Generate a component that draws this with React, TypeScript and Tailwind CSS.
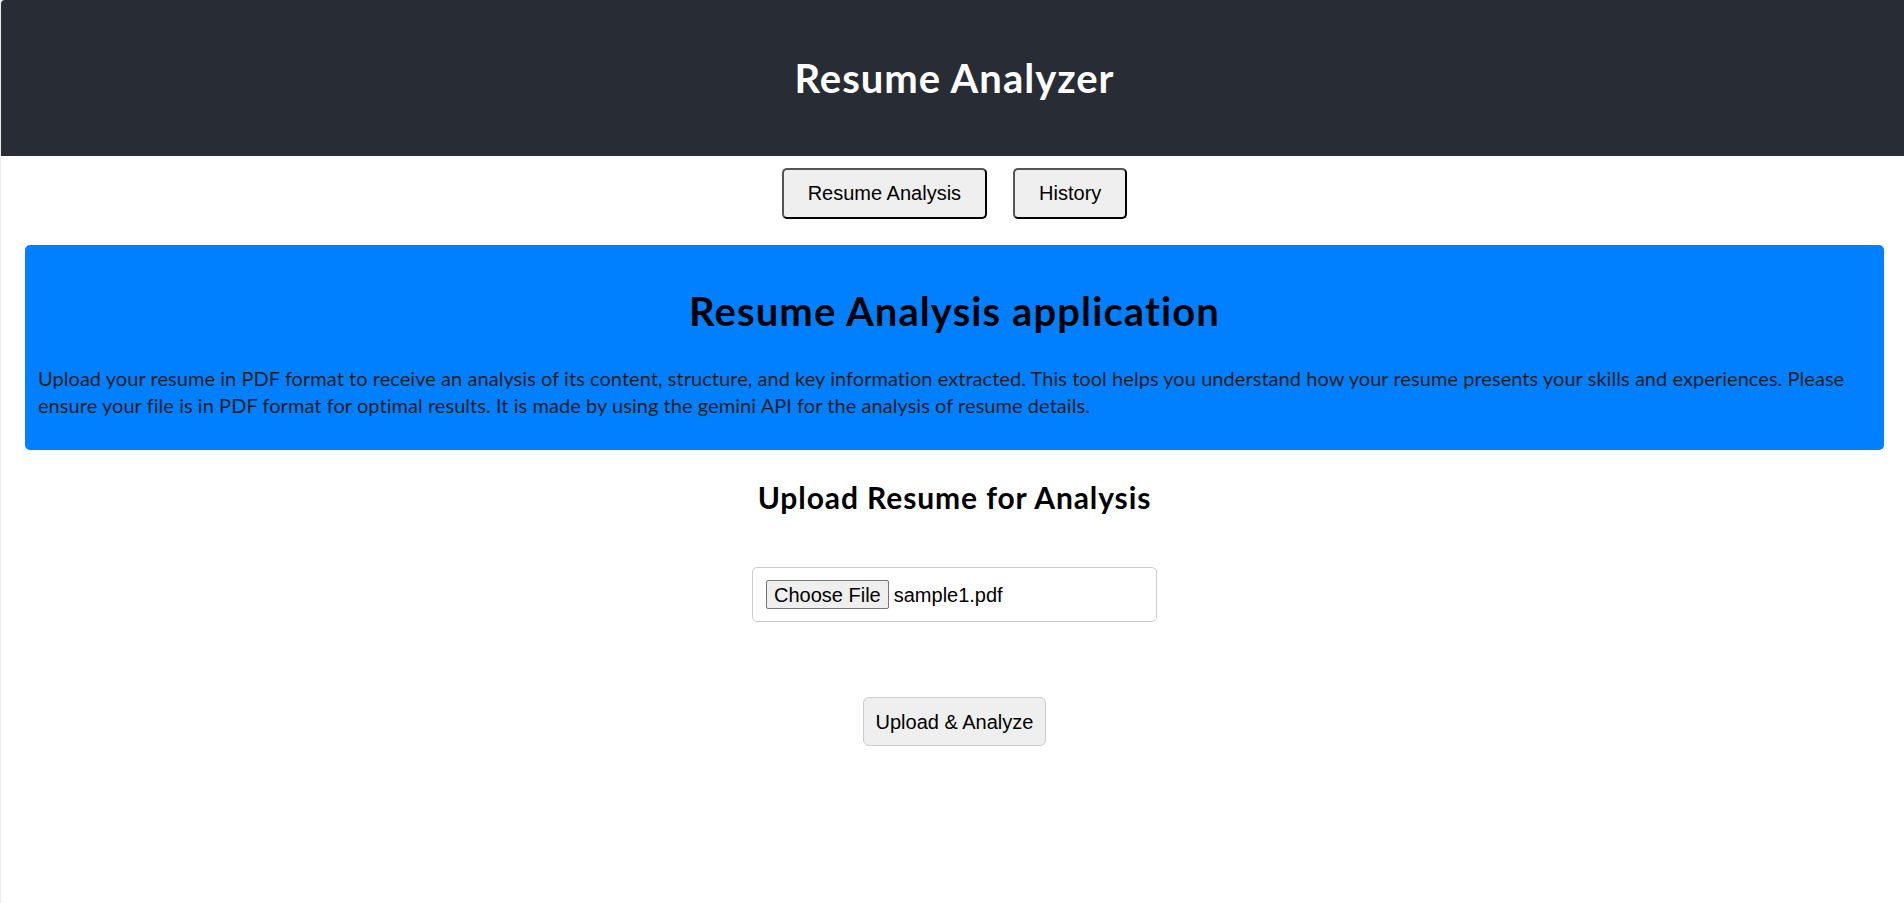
import React from 'react';

function NavButton({ label }: { label: string }) {
  return (
    <button
      type="button"
      className="h-[51px] rounded-[5px] border-2 border-t-[#555] border-l-[#555] border-b-black border-r-black bg-[#efefef] px-[24px] font-['Liberation_Sans',Arial,sans-serif] text-[20px] leading-[23px] text-black"
    >
      {label}
    </button>
  );
}

export default function App() {
  return (
    <div className="min-h-screen border-l border-[#ececec] bg-white font-['Lato',sans-serif]">
      <header className="flex h-[156px] items-center justify-center rounded-tl-[4px] bg-[#282c34] pl-[4px]">
        <h1 className="text-[40px] font-bold leading-[53px] tracking-[1px] text-white">Resume Analyzer</h1>
      </header>

      <div className="pl-[4px]">
        <nav className="flex justify-center gap-[26px] pt-[12px]">
          <NavButton label="Resume Analysis" />
          <NavButton label="History" />
        </nav>

        <section className="mx-[20px] mt-[26px] rounded-[5px] bg-[#0080ff] px-[13px] pt-[13px] pb-[31px]">
          <h2 className="my-[27px] text-center text-[40px] font-bold leading-[53px] tracking-[1.1px] text-black">
            Resume Analysis application
          </h2>
          <p className="text-[20px] leading-[27px] tracking-[0.05px] text-[#1e1e1e]">
            Upload your resume in PDF format to receive an analysis of its content, structure, and key
            information extracted. This tool helps you understand how your resume presents your skills and
            experiences. Please ensure your file is in PDF format for optimal results. It is made by using the
            gemini API for the analysis of resume details.
          </p>
        </section>

        <section className="flex flex-col items-center">
          <h3 className="mt-[27px] text-[30px] font-bold leading-[40px] tracking-[0.9px] text-black">
            Upload Resume for Analysis
          </h3>

          <div className="mt-[50px] flex h-[55px] w-[405px] items-center rounded-[5px] border border-[#ccc] px-[13px]">
            <span className="flex h-[29px] items-center rounded-[2px] border border-[#767676] bg-[#efefef] px-[7px] font-['Liberation_Sans',Arial,sans-serif] text-[20px] text-black">
              Choose File
            </span>
            <span className="ml-[5px] font-['Liberation_Sans',Arial,sans-serif] text-[20px] text-black">sample1.pdf</span>
          </div>

          <button
            type="button"
            className="mt-[75px] h-[49px] rounded-[6px] border border-[#ccc] bg-[#efefef] px-[12px] font-['Liberation_Sans',Arial,sans-serif] text-[20px] text-black"
          >
            Upload &amp; Analyze
          </button>
        </section>
      </div>
    </div>
  );
}
